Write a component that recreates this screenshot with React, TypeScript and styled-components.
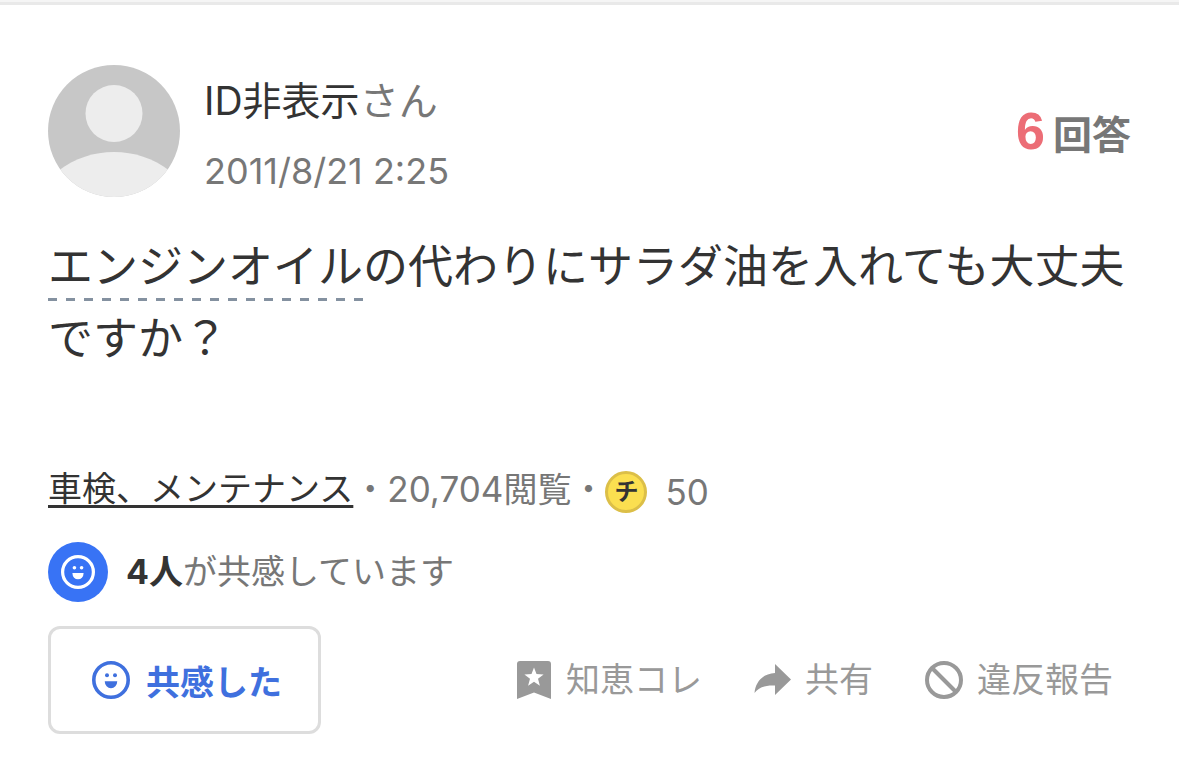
import React from "react";
import styled, { createGlobalStyle } from "styled-components";

const GlobalStyle = createGlobalStyle`
  *, *::before, *::after { box-sizing: border-box; }
  body {
    margin: 0;
    background: #fff;
    color: #333;
    font-family: Inter, "Noto Sans CJK JP", sans-serif;
  }
  a { color: inherit; text-decoration: none; }
  p, h1 { margin: 0; font-weight: 400; }
  svg { display: block; flex: none; }
  button {
    margin: 0;
    padding: 0;
    border: 0;
    background: none;
    font: inherit;
    cursor: pointer;
  }
`;

const Divider = styled.div`
  height: 5px;
  background: #f5f5f5;
  border-bottom: 3px solid #e9e9e9;
`;

const Card = styled.article`
  padding: 60px 48px 38px;
`;

const Header = styled.header`
  display: flex;
  align-items: center;
  gap: 24px;
`;

const Author = styled.div`
  flex: 1;
  display: flex;
  flex-direction: column;
  gap: 16px;
  padding-top: 8px;
`;

const AuthorName = styled.p`
  font-size: 39px;
  line-height: 56px;
`;

const Honorific = styled.span`
  color: #777;
`;

const PostedAt = styled.time`
  color: #777;
  font-size: 36px;
  line-height: 52px;
`;

const AnswerCount = styled.p`
  display: flex;
  align-items: baseline;
  gap: 8px;
  padding-top: 4px;
  color: #777;
  font-size: 39px;
  line-height: 56px;
  font-weight: 700;
`;

const AnswerNumber = styled.span`
  color: #ec6d76;
  font-family: "Liberation Sans", Arial, sans-serif;
  font-size: 52px;
`;

const Question = styled.h1`
  margin-top: 34px;
  font-size: 45px;
  line-height: 72px;
`;

const Keyword = styled.a`
  display: inline-block;
  background: repeating-linear-gradient(90deg, #8491a0 0 9px, transparent 9px 18px) left bottom 2px / 100% 3px no-repeat;
`;

const Meta = styled.div`
  display: flex;
  align-items: flex-start;
  margin-top: 88px;
  color: #777;
  font-size: 34px;
  line-height: 52px;
`;

const CategoryLink = styled.a`
  color: #333;
  text-decoration: underline;
  text-decoration-thickness: 3px;
  text-underline-offset: 4px;
  text-decoration-skip-ink: none;
`;

const Figure = styled.span`
  font-size: 35px;
`;

const Reward = styled.span`
  display: flex;
  align-items: center;
  gap: 18px;
  padding-top: 3px;
`;

const Coin = styled.span`
  display: grid;
  place-items: center;
  width: 42px;
  height: 42px;
  border: 3px solid #dcbf48;
  border-radius: 50%;
  background: #fbdf50;
  color: #333;
  font-size: 24px;
  line-height: 36px;
  font-weight: 700;
`;

const Empathy = styled.div`
  display: flex;
  align-items: center;
  gap: 18px;
  margin-top: 24px;
  color: #777;
  font-size: 34px;
  line-height: 60px;

  strong { color: #333; }
`;

const EmpathyBadge = styled.span`
  display: grid;
  place-items: center;
  width: 60px;
  height: 60px;
  border-radius: 50%;
  background: #3873f5;
  color: #fff;
`;

const Actions = styled.footer`
  display: flex;
  align-items: center;
  justify-content: space-between;
  margin-top: 24px;
`;

const EmpathyButton = styled.button`
  display: flex;
  align-items: center;
  justify-content: center;
  gap: 16px;
  height: 108px;
  padding: 0 36px 0 41px;
  border: 3px solid #ddd;
  border-radius: 12px;
  color: #3f70de;
  font-size: 34px;
  font-weight: 700;
`;

const ActionList = styled.div`
  display: flex;
  gap: 52px;
  padding-right: 18px;
`;

const ActionButton = styled.button`
  display: flex;
  align-items: center;
  gap: 14px;
  color: #999;
  font-size: 34px;
  line-height: 48px;
`;

function SmileIcon({ size }: { size: number }) {
  return (
    <svg width={size} height={size} viewBox="0 0 38 38" aria-hidden="true">
      <circle cx="19" cy="19" r="17.2" fill="none" stroke="currentColor" strokeWidth="3.6" />
      <circle cx="15" cy="14.2" r="2" fill="currentColor" />
      <circle cx="23" cy="14.2" r="2" fill="currentColor" />
      <path d="M12.8 20.2h12.4v.6a6.2 6.400 0 0 1-12.4 0z" fill="currentColor" />
    </svg>
  );
}

function AvatarIcon() {
  return (
    <svg width="132" height="132" viewBox="0 0 132 132" role="img" aria-label="ID非表示">
      <defs>
        <clipPath id="avatar-shape">
          <circle cx="66" cy="66" r="66" />
        </clipPath>
      </defs>
      <g clipPath="url(#avatar-shape)">
        <rect width="132" height="132" fill="#c7c7c7" />
        <circle cx="66" cy="48.500" r="28.500" fill="#ededed" />
        <path d="M10 106C27 93 46 87 66 87s39 6 56 19v26H10z" fill="#ededed" />
      </g>
    </svg>
  );
}

function BookmarkIcon() {
  return (
    <svg width="36" height="38" viewBox="0 0 36 38" aria-hidden="true">
      <path
        fill="currentColor"
        fillRule="evenodd"
        d="M4 0h28a3 3 0 0 1 3 3v35l-17-6.500L1 38V3a3 3 0 0 1 3-3zM18 6.400l-2.500 6.700-7.100.3 5.600 4.400-1.900 6.900 5.900-4 5.900 4-1.900-6.900 5.600-4.400-7.100-.3z"
      />
    </svg>
  );
}

function ShareIcon() {
  return (
    <svg width="37" height="32" viewBox="0 0 37 32" aria-hidden="true">
      <path fill="currentColor" d="M21 0l16 15.500L21 31v-9.500C11.500 21 5 23.500.500 29 1.500 17.500 9.500 9.500 21 9z" />
    </svg>
  );
}

function ProhibitIcon() {
  return (
    <svg width="38" height="38" viewBox="0 0 38 38" fill="none" stroke="currentColor" strokeWidth="4" aria-hidden="true">
      <circle cx="19" cy="19" r="17" />
      <path d="M7 7l24 24" />
    </svg>
  );
}

export default function App() {
  return (
    <>
      <GlobalStyle />
      <Divider />
      <Card lang="ja">
        <Header>
          <AvatarIcon />
          <Author>
            <AuthorName>
              ID非表示<Honorific>さん</Honorific>
            </AuthorName>
            <PostedAt dateTime="2011-08-21T02:25">2011/8/21 2:25</PostedAt>
          </Author>
          <AnswerCount>
            <AnswerNumber>6</AnswerNumber>回答
          </AnswerCount>
        </Header>
        <Question>
          <Keyword href="#engine-oil">エンジンオイル</Keyword>の代わりにサラダ油を入れても大丈夫ですか？
        </Question>
        <Meta>
          <CategoryLink href="#category">車検、メンテナンス</CategoryLink>
          <span>
            ・<Figure>20,704</Figure>閲覧・
          </span>
          <Reward>
            <Coin>チ</Coin>
            <Figure>50</Figure>
          </Reward>
        </Meta>
        <Empathy>
          <EmpathyBadge>
            <SmileIcon size={34} />
          </EmpathyBadge>
          <p>
            <strong>4人</strong>が共感しています
          </p>
        </Empathy>
        <Actions>
          <EmpathyButton type="button">
            <SmileIcon size={38} />
            共感した
          </EmpathyButton>
          <ActionList>
            <ActionButton type="button">
              <BookmarkIcon />
              知恵コレ
            </ActionButton>
            <ActionButton type="button">
              <ShareIcon />
              共有
            </ActionButton>
            <ActionButton type="button">
              <ProhibitIcon />
              違反報告
            </ActionButton>
          </ActionList>
        </Actions>
      </Card>
    </>
  );
}
